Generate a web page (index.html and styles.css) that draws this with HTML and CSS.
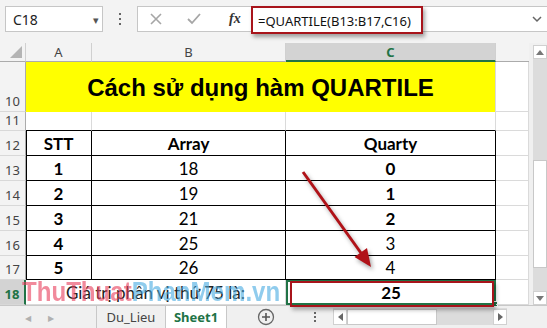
FILE: index.html
```html
<!DOCTYPE html>
<html lang="vi">
<head>
<meta charset="utf-8">
<title>QUARTILE</title>
<link rel="stylesheet" href="styles.css">
</head>
<body>
<div class="app">
  <div class="toolbar">
    <div class="namebox"><span>C18</span><span class="dd">&#9662;</span></div>
    <div class="vdots"><i></i><i></i><i></i></div>
    <div class="fbar">
      <div class="fbtns">
        <svg class="ic" width="14" height="14" viewBox="0 0 14 14"><path d="M2 2 L12 12 M12 2 L2 12" stroke="#a6a6a6" stroke-width="1.6" fill="none"/></svg>
        <svg class="ic" width="16" height="14" viewBox="0 0 16 14"><path d="M2 7 L6 11 L14 2" stroke="#a6a6a6" stroke-width="1.8" fill="none"/></svg>
        <span class="fx">fx</span>
      </div>
      <div class="formula"><span class="ftext">=QUARTILE(B13:B17,C16)</span></div>
      <svg class="chev" width="10" height="8" viewBox="0 0 10 8"><path d="M1 2 L5 6 L9 2" stroke="#666" stroke-width="1.5" fill="none"/></svg>
    </div>
  </div>

  <div class="main">
    <div class="grid">
      <div class="ch corner"><span class="tri"></span></div>
      <div class="ch">A</div>
      <div class="ch">B</div>
      <div class="ch sel">C</div>
      <div class="ch last"></div>

      <div class="rh">10</div>
      <div class="c title">Cách sử dụng hàm QUARTILE</div>
      <div class="c d"></div>

      <div class="rh">11</div>
      <div class="c tb-top"></div>
      <div class="c tb-top"></div>
      <div class="c tb-top"></div>
      <div class="c d"></div>

      <div class="rh">12</div>
      <div class="c t ta b">STT</div>
      <div class="c t b">Array</div>
      <div class="c t b">Quarty</div>
      <div class="c d"></div>

      <div class="rh">13</div>
      <div class="c t ta b">1</div>
      <div class="c t">18</div>
      <div class="c t b">0</div>
      <div class="c d"></div>

      <div class="rh">14</div>
      <div class="c t ta b">2</div>
      <div class="c t">19</div>
      <div class="c t b">1</div>
      <div class="c d"></div>

      <div class="rh">15</div>
      <div class="c t ta b">3</div>
      <div class="c t">21</div>
      <div class="c t b">2</div>
      <div class="c d"></div>

      <div class="rh">16</div>
      <div class="c t ta b">4</div>
      <div class="c t">25</div>
      <div class="c t">3</div>
      <div class="c d"></div>

      <div class="rh">17</div>
      <div class="c t ta b">5</div>
      <div class="c t">26</div>
      <div class="c t">4</div>
      <div class="c d"></div>

      <div class="rh rsel">18</div>
      <div class="c label">Giá trị phân vị thứ 75 là:</div>
      <div class="c b active">25<span class="handle"></span><span class="redbox"></span></div>
      <div class="c d"></div>
    </div>
    <div class="vscroll">
      <div class="sbtn up"><svg width="8" height="5" viewBox="0 0 8 5"><path d="M0 5 L4 0 L8 5Z" fill="#777"/></svg></div>
      <div class="track"><div class="thumb"></div></div>
      <div class="sbtn down"><svg width="8" height="5" viewBox="0 0 8 5"><path d="M0 0 L4 5 L8 0Z" fill="#777"/></svg></div>
    </div>
  </div>

  <div class="tabs">
    <div class="nav"><span>&#9664;</span><span>&#9654;</span></div>
    <div class="tab">Du_Lieu</div>
    <div class="tab active">Sheet1</div>
    <div class="plus"><svg width="18" height="18" viewBox="0 0 18 18"><circle cx="9" cy="9" r="7.5" stroke="#666" stroke-width="1.3" fill="none"/><path d="M9 5 V13 M5 9 H13" stroke="#555" stroke-width="1.6"/></svg></div>
    <div class="vdots small"><i></i><i></i><i></i></div>
    <div class="hscroll">
      <div class="hbtn"><svg width="5" height="8" viewBox="0 0 5 8"><path d="M5 0 L0 4 L5 8Z" fill="#666"/></svg></div>
      <div class="hthumb"></div>
      <div class="hspace"></div>
      <div class="hbtn"><svg width="5" height="8" viewBox="0 0 5 8"><path d="M0 0 L5 4 L0 8Z" fill="#666"/></svg></div>
    </div>
  </div>

  <div class="watermark"><span class="wm1">ThuThuat</span><span class="wm2">PhanMem.vn</span></div>

  <svg class="arrow" width="547" height="328" viewBox="0 0 547 328">
    <g class="arr">
      <line x1="303" y1="172" x2="361" y2="253" stroke="#b01218" stroke-width="3"/>
      <polygon points="371,267 354.5,257 367,248" fill="#b01218"/>
    </g>
  </svg>
</div>
</body>
</html>
```
FILE: styles.css
```css
* { box-sizing: border-box; }
html, body { margin: 0; padding: 0; }
body {
  width: 547px;
  height: 328px;
  overflow: hidden;
  background: #f3f3f3;
  font-family: "Noto Sans", "Liberation Sans", sans-serif;
  color: #222;
}
.app { position: relative; width: 547px; height: 328px; }

/* toolbar */
.toolbar {
  height: 43px;
  display: flex;
  align-items: flex-start;
  padding-top: 6px;
  padding-left: 5px;
  background: #f3f3f3;
}
.namebox {
  width: 98px;
  height: 26px;
  background: #fff;
  border: 1px solid #c6c6c6;
  display: flex;
  align-items: center;
  justify-content: space-between;
  padding: 0 3px 0 7px;
  font-size: 14px;
  color: #222;
}
.namebox .dd { font-size: 11px; color: #555; }
.vdots {
  width: 34px;
  height: 26px;
  display: flex;
  flex-direction: column;
  align-items: center;
  justify-content: center;
  gap: 3px;
}
.vdots i { width: 2px; height: 2px; background: #666; display: block; }
.fbar {
  flex: 1;
  height: 26px;
  background: #fff;
  border: 1px solid #c6c6c6;
  border-right: none;
  display: flex;
  align-items: center;
  position: relative;
}
.fbtns {
  width: 113px;
  display: flex;
  align-items: center;
  padding-left: 11px;
  gap: 23px;
}
.fx {
  font-family: "Liberation Serif", serif;
  font-style: italic;
  font-weight: bold;
  font-size: 14px;
  color: #333;
  margin-left: 4px;
}
.formula { flex: 1; }
.ftext {
  display: inline-block;
  font-size: 13px;
  line-height: 24px;
  height: 28px;
  padding: 1px 10px 0 5px;
  margin-top: 1px;
  border: 2px solid #a8141b;
  box-shadow: 2px 3px 4px rgba(0,0,0,0.35);
  background: #fff;
  color: #111;
}
.chev { margin-right: 5px; }

/* sheet */
.main { display: flex; height: 262px; }
.grid {
  width: 529px;
  display: grid;
  grid-template-columns: 26px 66px 194px 210px 33px;
  grid-template-rows: 19px 50px 19px 25px 25px 25px 25px 25px 24px 25px;
  background: #fff;
  border-right: 1px solid #c8c8c8;
}
.ch {
  background: #f3f3f3;
  border-right: 1px solid #d0d0d0;
  border-bottom: 1px solid #ababab;
  font-size: 13px;
  color: #444;
  display: flex;
  align-items: center;
  justify-content: center;
}
.ch.last { border-right: none; }
.ch.sel {
  background: #d3d3d3;
  color: #217346;
  font-weight: bold;
  border-bottom: 2px solid #217346;
}
.corner { position: relative; justify-content: flex-end; align-items: flex-end; padding: 0 3px 3px 0; }
.tri {
  width: 0; height: 0;
  border-left: 12px solid transparent;
  border-bottom: 12px solid #b4b4b4;
}
.rh {
  background: #f3f3f3;
  border-right: 1px solid #ababab;
  border-bottom: 1px solid #d8d8d8;
  font-size: 13px;
  color: #444;
  display: flex;
  align-items: flex-end;
  justify-content: center;
  padding-bottom: 1px;
}
.rh.rsel {
  background: #d3d3d3;
  color: #217346;
  font-weight: bold;
  border-right: 2px solid #217346;
}
.c {
  border-right: 1px solid #dadada;
  border-bottom: 1px solid #dadada;
  font-family: Lato, "Open Sans", sans-serif;
  font-size: 17px;
  color: #000;
  display: flex;
  align-items: flex-end;
  justify-content: center;
  padding-bottom: 1px;
  position: relative;
}
.c.b { font-weight: bold; }
.c.title {
  grid-column: span 3;
  background: #ffff00;
  border-bottom: none;
  font-family: "Liberation Sans", Arial, sans-serif;
  font-weight: bold;
  font-size: 24px;
  align-items: center;
  padding-top: 3px;
}
.c.tb-top { border-bottom: 1px solid #000; }
.c.t { border-right: 1px solid #000; border-bottom: 1px solid #000; }
.c.ta { box-shadow: inset 1px 0 0 #000; }
.c.label {
  grid-column: span 2;
  color: #222;
}
.c.active {
  border: 2px solid #217346;
  padding-bottom: 0;
}
.handle {
  position: absolute;
  right: -4px;
  bottom: -4px;
  width: 6px;
  height: 6px;
  background: #217346;
  border: 1px solid #fff;
}
.redbox {
  position: absolute;
  left: 2px;
  right: 0;
  top: -1px;
  bottom: -4px;
  border: 2px solid #a8141b;
  box-shadow: 2px 3px 4px rgba(0,0,0,0.3);
}

.vscroll {
  width: 18px;
  background: #f0f0f0;
  padding: 2px 0 0 4px;
  display: flex;
  flex-direction: column;
}
.sbtn {
  height: 14px;
  background: #fff;
  border: 1px solid #d0d0d0;
  display: flex;
  align-items: center;
  justify-content: center;
}
.track {
  flex: 1;
  background: #dcdcdc;
  padding-top: 101px;
  padding-bottom: 23px;
  display: flex;
}
.thumb {
  flex: 1;
  background: #fff;
  border: 1px solid #c8c8c8;
}

/* tabs */
.tabs {
  height: 23px;
  border-top: 1px solid #c8c8c8;
  background: #f0f0f0;
  display: flex;
  align-items: stretch;
  font-size: 13px;
}
.nav {
  width: 97px;
  display: flex;
  align-items: center;
  gap: 17px;
  padding-left: 25px;
  font-size: 8px;
  color: #b0b0b0;
  border-right: 1px solid #c8c8c8;
}
.tab {
  width: 69px;
  display: flex;
  align-items: center;
  justify-content: center;
  color: #444;
  border-right: 1px solid #c8c8c8;
}
.tab.active {
  width: 61px;
  background: #fff;
  color: #217346;
  font-weight: bold;
}
.plus {
  width: 78px;
  display: flex;
  align-items: center;
  justify-content: center;
}
.vdots.small { width: 20px; height: auto; gap: 2px; }
.hscroll {
  margin-left: 8px;
  width: 174px;
  display: flex;
  align-items: center;
  padding: 3px 0;
  background: #dcdcdc;
  margin-top: 2px;
  margin-bottom: 3px;
}
.hbtn {
  width: 14px;
  height: 16px;
  background: #fff;
  border: 1px solid #d0d0d0;
  display: flex;
  align-items: center;
  justify-content: center;
}
.hthumb {
  width: 90px;
  height: 16px;
  background: #fff;
  border: 1px solid #c8c8c8;
}
.hspace { flex: 1; }

/* overlays */
.watermark {
  position: absolute;
  left: 22px;
  top: 276px;
  font-family: "Liberation Sans", Arial, sans-serif;
  font-weight: bold;
  font-size: 28px;
  line-height: 32px;
  transform: scaleX(0.86);
  transform-origin: left center;
  white-space: nowrap;
  pointer-events: none;
}
.wm1 { color: rgba(232, 60, 90, 0.6); }
.wm2 { color: rgba(70, 170, 225, 0.6); }
.arrow { position: absolute; left: 0; top: 0; pointer-events: none; }
.arr { filter: drop-shadow(2px 3px 2px rgba(0,0,0,0.35)); }
```
